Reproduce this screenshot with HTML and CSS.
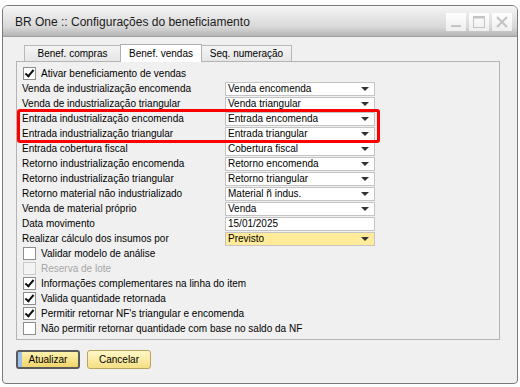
FILE: index.html
```html
<!DOCTYPE html>
<html>
<head>
<meta charset="utf-8">
<link rel="stylesheet" href="styles.css">
</head>
<body>
<div class="window">
  <div class="titlebar">
    <span class="title">BR One :: Configurações do beneficiamento</span>
    <div class="controls">
      <span class="ctl"><svg width="20" height="18" viewBox="0 0 20 18"><rect x="5" y="12" width="10" height="2" fill="#c4c4c4"/></svg></span>
      <span class="ctl"><svg width="20" height="18" viewBox="0 0 20 18"><rect x="4.5" y="3.5" width="11" height="11" fill="none" stroke="#c4c4c4" stroke-width="1"/><rect x="4.5" y="3.5" width="11" height="2" fill="#c4c4c4"/></svg></span>
      <span class="ctl"><svg width="20" height="18" viewBox="0 0 20 18"><path d="M5 4 L15 14 M15 4 L5 14" stroke="#c4c4c4" stroke-width="2.2"/></svg></span>
    </div>
  </div>
  <div class="content">
    <div class="tabs">
      <div class="tab t1">Benef. compras</div>
      <div class="tab active">Benef. vendas</div>
      <div class="tab t3">Seq. numeração</div>
    </div>
    <div class="panel">
      <div class="check-row"><span class="cb checked"></span><span>Ativar beneficiamento de vendas</span></div>
      <div class="row"><span class="lbl">Venda de industrialização encomenda</span><span class="field sel">Venda encomenda</span></div>
      <div class="row"><span class="lbl">Venda de industrialização triangular</span><span class="field sel">Venda triangular</span></div>
      <div class="row"><span class="lbl">Entrada industrialização encomenda</span><span class="field sel">Entrada encomenda</span></div>
      <div class="row"><span class="lbl">Entrada industrialização triangular</span><span class="field sel">Entrada triangular</span></div>
      <div class="row"><span class="lbl">Entrada cobertura fiscal</span><span class="field sel">Cobertura fiscal</span></div>
      <div class="row"><span class="lbl">Retorno industrialização encomenda</span><span class="field sel">Retorno encomenda</span></div>
      <div class="row"><span class="lbl">Retorno industrialização triangular</span><span class="field sel">Retorno triangular</span></div>
      <div class="row"><span class="lbl">Retorno material não industrializado</span><span class="field sel">Material ñ indus.</span></div>
      <div class="row"><span class="lbl">Venda de material próprio</span><span class="field sel">Venda</span></div>
      <div class="row"><span class="lbl">Data movimento</span><span class="field">15/01/2025</span></div>
      <div class="row"><span class="lbl">Realizar cálculo dos insumos por</span><span class="field sel hl">Previsto</span></div>
      <div class="check-row"><span class="cb"></span><span>Validar modelo de análise</span></div>
      <div class="check-row disabled"><span class="cb"></span><span>Reserva de lote</span></div>
      <div class="check-row"><span class="cb checked"></span><span>Informações complementares na linha do item</span></div>
      <div class="check-row"><span class="cb checked"></span><span>Valida quantidade retornada</span></div>
      <div class="check-row"><span class="cb checked"></span><span>Permitir retornar NF's triangular e encomenda</span></div>
      <div class="check-row"><span class="cb"></span><span>Não permitir retornar quantidade com base no saldo da NF</span></div>
      <div class="highlight"></div>
    </div>
    <div class="buttons">
      <button class="btn default">Atualizar</button>
      <button class="btn">Cancelar</button>
    </div>
  </div>
</div>
</body>
</html>
```
FILE: styles.css
```css
html, body {
  margin: 0;
  padding: 0;
  background: #ffffff;
}
body {
  font-family: "Liberation Sans", Arial, sans-serif;
  font-size: 10px;
  color: #000;
}
.window {
  margin: 5px 2px 0 2px;
  width: 514px;
  height: 377px;
  border: 1px solid #7a7a7a;
  border-radius: 6px 6px 4px 4px;
  display: flex;
  flex-direction: column;
  overflow: hidden;
  background: #f0f0f0;
}
.titlebar {
  height: 30px;
  flex: none;
  display: flex;
  align-items: center;
  justify-content: space-between;
  background: linear-gradient(#f6f6f6 0%, #d8d8d8 70%, #b4b4b4 100%);
  border-bottom: 1px solid #a0a0a0;
  padding: 0 5px 0 12px;
}
.title {
  font-family: "Liberation Sans", Arial, sans-serif;
  font-size: 12px;
  color: #1a1a1a;
  padding-top: 1px;
}
.controls {
  display: flex;
  gap: 3px;
  padding-top: 2px;
}
.ctl {
  width: 20px;
  height: 18px;
  background: linear-gradient(#ffffff, #eeeeee);
  display: block;
}
.ctl svg { display: block; }
.content {
  flex: 1;
  padding: 7px 0 0 13px;
  position: relative;
}
.tabs {
  display: flex;
  padding-left: 8px;
  height: 17px;
  align-items: flex-end;
}
.tab {
  height: 16px;
  line-height: 16px;
  padding: 0;
  text-align: center;
  border: 1px solid #b8b8b8;
  border-bottom: 0;
  background: linear-gradient(#f4f4f4, #e6e6e6);
  margin-right: -1px;
  box-sizing: border-box;
  white-space: nowrap;
}
.tab.t1 { width: 97px; }
.tab.active {
  height: 18px;
  background: #ffffff;
  position: relative;
  z-index: 2;
  margin-bottom: -1px;
  width: 82px;
  border-color: #b0b0b0;
  line-height: 18px;
}
.tab.t3 { width: 91px; }
.panel {
  position: relative;
  width: 484px;
  height: 279px;
  box-sizing: border-box;
  border: 1px solid #b4b4b4;
  padding: 4px 0 0 5px;
}
.row, .check-row {
  height: 15px;
  display: flex;
  align-items: center;
  white-space: nowrap;
}
.row .lbl {
  width: 203px;
  flex: none;
  height: 15px;
  line-height: 15px;
}
.field {
  width: 150px;
  height: 14px;
  box-sizing: border-box;
  border: 1px solid #c4c4c4;
  background: #fff;
  line-height: 12px;
  padding-left: 2px;
  position: relative;
  margin-top: 1px;
}
.field.sel::after {
  content: "";
  position: absolute;
  right: 5px;
  top: 4px;
  border-left: 4px solid transparent;
  border-right: 4px solid transparent;
  border-top: 4px solid #333;
}
.field.hl { background: #ffeb99; }
.check-row .cb {
  width: 13px;
  height: 13px;
  box-sizing: border-box;
  border: 1px solid #8e8e8e;
  background: #fff;
  margin-right: 5px;
  flex: none;
  position: relative;
  margin-left: 1px;
}
.cb.checked::after {
  content: "";
  position: absolute;
  left: 3px;
  top: 0px;
  width: 3px;
  height: 7px;
  border-right: 2px solid #111;
  border-bottom: 2px solid #111;
  transform: rotate(40deg);
}
.check-row.disabled { color: #a6a6a6; }
.check-row.disabled .cb { background: #f3f3f3; border-color: #cbcbcb; }
.highlight {
  position: absolute;
  left: 0px;
  top: 47px;
  width: 363px;
  height: 34px;
  box-sizing: border-box;
  border: 3px solid #ff0000;
  border-radius: 3px;
}
.buttons {
  display: flex;
  gap: 7px;
  padding-top: 10px;
}
.btn {
  font-family: "Liberation Sans", Arial, sans-serif;
  font-size: 10px;
  height: 19px;
  width: 64px;
  border: 1px solid #b8a45c;
  border-radius: 3px;
  background: linear-gradient(#fff7c8, #f5df84);
  color: #000;
  padding: 0;
}
.btn.default {
  border: 2px solid #5a5a5a;
  background: linear-gradient(90deg, #9cc0ec 0, #9cc0ec 4px, transparent 4px), linear-gradient(#fff2b0, #f1d46a);
}
```
